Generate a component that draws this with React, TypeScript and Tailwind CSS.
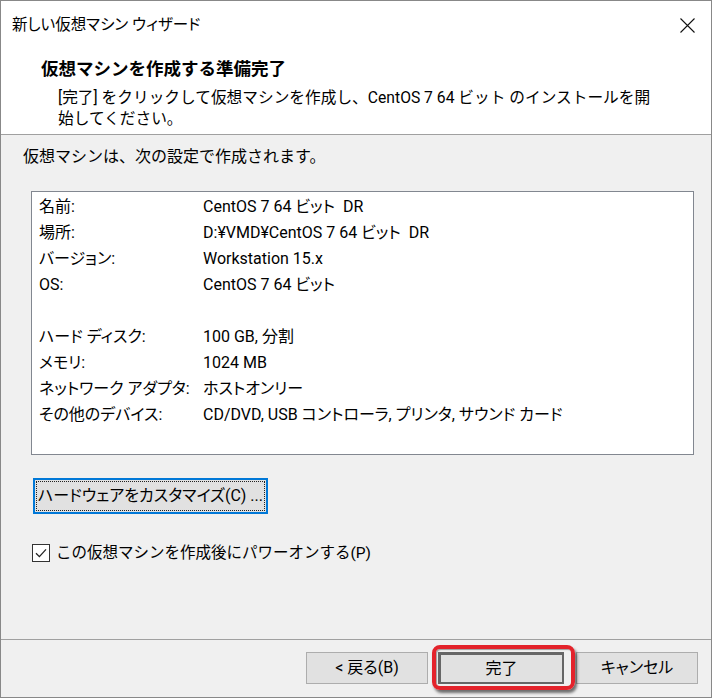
import React from "react";

// ─── Settings summary rows ───────────────────────────────────────────

const rows: [string, string][] = [
  ["名前:", "CentOS 7 64 ビット  DR"],
  ["場所:", "D:¥VMD¥CentOS 7 64 ビット  DR"],
  ["バージョン:", "Workstation 15.x"],
  ["OS:", "CentOS 7 64 ビット"],
  ["", ""],
  ["ハード ディスク:", "100 GB, 分割"],
  ["メモリ:", "1024 MB"],
  ["ネットワーク アダプタ:", "ホストオンリー"],
  ["その他のデバイス:", "CD/DVD, USB コントローラ, プリンタ, サウンド カード"],
];

function CloseIcon() {
  return (
    <svg width="15" height="15" viewBox="0 0 15 15" fill="none">
      <path d="M0.5 0.5 L14.5 14.5 M14.5 0.5 L0.5 14.5" stroke="#111" strokeWidth="1.1" />
    </svg>
  );
}

function CheckBox() {
  return (
    <span className="w-[18px] h-[18px] border border-[#333] bg-white flex items-center justify-center shrink-0">
      <svg width="14" height="14" viewBox="0 0 14 14" fill="none">
        <path d="M2 7.2 L5.4 10.6 L12 3.4" stroke="#222" strokeWidth="1.3" />
      </svg>
    </span>
  );
}

export default function App() {
  return (
    <div className="w-[712px] h-[698px] border border-[#888] bg-[#f0f0f0] flex flex-col text-black font-['Roboto','Noto_Sans_CJK_JP',sans-serif] text-[16px]">
      {/* Title bar + header */}
      <div className="h-[134px] shrink-0 overflow-hidden bg-white border-b border-[#a0a0a0]">
        <div className="h-[48px] flex items-center justify-between pl-[11px] pr-[16px]">
          <span className="text-[15.5px] leading-[20px] [font-feature-settings:'palt']">新しい仮想マシン ウィザード</span>
          <CloseIcon />
        </div>
        <div className="pl-[40px] pt-[8px]">
          <div className="text-[17.5px] leading-[24px] font-bold">仮想マシンを作成する準備完了</div>
          <div className="pl-[17px] mt-[6px] text-[15.7px] leading-[21px] whitespace-nowrap">
            [完了] をクリックして仮想マシンを作成し、CentOS 7 64 ビット のインストールを開
            <br />
            始してください。
          </div>
        </div>
      </div>

      {/* Body */}
      <div className="h-[504px] shrink-0 flex flex-col">
        <div className="pl-[22px] pt-[12px] leading-[20px]">
          仮想マシンは、次の設定で作成されます。
        </div>

        <div className="ml-[30px] mr-[17px] mt-[24px] h-[264px] bg-white border border-[#828790] pt-[2px] pl-[7px] [font-feature-settings:'palt']">
          {rows.map(([label, value], i) => (
            <div key={i} className="h-[26px] flex items-center whitespace-pre">
              <span className="w-[164px] shrink-0">{label}</span>
              <span>{value}</span>
            </div>
          ))}
        </div>

        <div className="ml-[32px] mt-[23px] flex">
          <button className="w-[235px] h-[36px] border-2 border-[#0078d7] bg-[#e1e1e1] p-[1px] flex [font-feature-settings:'palt']">
            <span className="flex-1 border border-dotted border-[#222] flex items-center justify-center whitespace-nowrap">
              ハードウェアをカスタマイズ(C) ...
            </span>
          </button>
        </div>

        <label className="ml-[31px] mt-[29px] flex items-center gap-[6px] text-[15.5px] leading-[20px]">
          <CheckBox />
          <span>この仮想マシンを作成後にパワーオンする(P)</span>
        </label>
      </div>

      {/* Footer */}
      <div className="flex-1 border-t border-[#a0a0a0] pt-[12px] flex items-start justify-end pr-[13px] [font-feature-settings:'palt']">
        <button className="w-[122px] h-[32px] bg-[#e1e1e1] border border-[#adadad]">
          &lt; 戻る(B)
        </button>
        <div className="relative ml-[10px] flex">
          <button className="w-[126px] h-[32px] bg-[#e1e1e1] border-[3px] border-r-2 border-b-2 border-[#666]">
            完了
          </button>
          <div className="absolute -left-[6px] -top-[7px] -right-[11px] -bottom-[6px] rounded-[8px] border-[4px] border-[#e3232b] shadow-[2px_3px_3px_rgba(0,0,0,0.55),inset_1px_1px_1px_rgba(0,0,0,0.35)] pointer-events-none" />
        </div>
        <button className="ml-[12px] w-[122px] h-[32px] bg-[#e1e1e1] border border-[#adadad]">
          キャンセル
        </button>
      </div>
    </div>
  );
}
